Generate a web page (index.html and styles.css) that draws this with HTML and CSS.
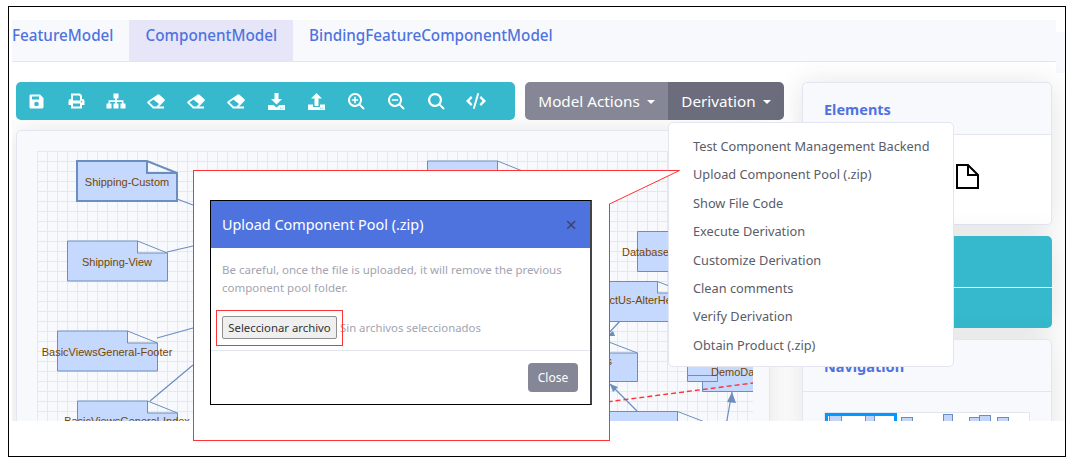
FILE: index.html
```html
<!DOCTYPE html>
<html lang="en">
<head>
    <meta charset="UTF-8">
    <title>Component Model</title>
    <link rel="stylesheet" href="styles.css">
</head>
<body>

<div class="frame">
    <div class="page">
        <div class="tabs-row">
            <nav class="tabs">
                <a class="tab">FeatureModel</a>
                <a class="tab active">ComponentModel</a>
                <a class="tab">BindingFeatureComponentModel</a>
            </nav>
            <div class="tabs-end"></div>
        </div>

        <div class="workspace">
            <div class="main">
                <div class="toolbar-row">
                    <div class="toolbar">
                        <!-- save -->
                        <span class="cell"><svg width="15" height="15" viewBox="0 0 15 15"><path fill-rule="evenodd" d="M1.500 0.500H11L14.500 4V13a1.500 1.500 0 0 1-1.500 1.500H2A1.500 1.500 0 0 1 .5 13V2A1.500 1.500 0 0 1 1.500 .5zM3 2.500V5.500H10V2.500zM7.500 7.700a2.300 2.300 0 1 0 0 4.600 2.300 2.300 0 0 0 0-4.600z"/></svg></span>
                        <!-- print -->
                        <span class="cell"><svg width="17" height="16" viewBox="0 0 17 16"><path fill-rule="evenodd" d="M3 .5H12L14 2.500V6h.5A2 2 0 0 1 16.500 8V12H14V15.500H3V12H.5V8A2 2 0 0 1 2.500 6H3zM5 2.500V7.500H12V3.500L11 2.500zM5 10.500V13.500H12V10.500zM13.500 8a.8.8 0 1 0 0 1.600.8.8 0 0 0 0-1.600z"/></svg></span>
                        <!-- sitemap -->
                        <span class="cell"><svg width="20" height="16" viewBox="0 0 20 16"><path d="M7.500 .5H12.500V5.500H10.800V7.300H17.500V10.500H19.500V15.500H14.500V10.500H16V9H10.800V10.500H12.500V15.500H7.500V10.500H9.200V9H4V10.500H5.500V15.500H.5V10.500H2.500V7.300H9.200V5.500H7.500z"/></svg></span>
                        <!-- clean -->
                        <span class="cell"><svg width="18" height="15" viewBox="0 0 18 15"><path fill-rule="evenodd" d="M10.500 .8a1.500 1.500 0 0 1 2 0l4.700 4.200a1.500 1.500 0 0 1 0 2.200L12 12.500H17V14.500H6L.8 9.500a1.500 1.500 0 0 1 0-2.200zM6.300 5.500 2.500 8.400 6.800 12.500H9.500L12 10z"/></svg></span>
                        <span class="cell"><svg width="18" height="15" viewBox="0 0 18 15"><path fill-rule="evenodd" d="M10.500 .8a1.500 1.500 0 0 1 2 0l4.700 4.200a1.500 1.500 0 0 1 0 2.200L12 12.500H17V14.500H6L.8 9.500a1.500 1.500 0 0 1 0-2.200zM6.300 5.500 2.500 8.400 6.800 12.500H9.500L12 10z"/></svg></span>
                        <span class="cell"><svg width="18" height="15" viewBox="0 0 18 15"><path fill-rule="evenodd" d="M10.500 .8a1.500 1.500 0 0 1 2 0l4.700 4.200a1.500 1.500 0 0 1 0 2.200L12 12.500H17V14.500H6L.8 9.500a1.500 1.500 0 0 1 0-2.200zM6.300 5.500 2.500 8.400 6.800 12.500H9.500L12 10z"/></svg></span>
                        <!-- download -->
                        <span class="cell"><svg width="17" height="17" viewBox="0 0 17 17"><path fill-rule="evenodd" d="M6.500 0H10.500V6H14L8.500 11.500 3 6H6.500zM0 12H5.500L8.500 14.500 11.500 12H17V17H0zM12 14.800v.8h1.200v-.8zM14.200 14.800v.8h1.200v-.8z"/></svg></span>
                        <!-- upload -->
                        <span class="cell"><svg width="17" height="17" viewBox="0 0 17 17"><path fill-rule="evenodd" d="M8.500 0 14 5.500H10.500V13H6.500V5.500H3zM0 11.500H5V14H12V11.500H17V17H0zM12 14.800v.8h1.200v-.8zM14.200 14.800v.8h1.200v-.8z"/></svg></span>
                        <!-- zoom in -->
                        <span class="cell"><svg width="17" height="17" viewBox="0 0 17 17"><path fill-rule="evenodd" d="M7 0A7 7 0 0 1 12.600 11.200L16.700 15.300 15.300 16.700 11.200 12.600A7 7 0 1 1 7 0zM7 2A5 5 0 1 0 7 12 5 5 0 0 0 7 2zM6.200 3.800H7.800V6.200H10.200V7.800H7.800V10.200H6.200V7.800H3.800V6.200H6.200z"/></svg></span>
                        <!-- zoom out -->
                        <span class="cell"><svg width="17" height="17" viewBox="0 0 17 17"><path fill-rule="evenodd" d="M7 0A7 7 0 0 1 12.600 11.200L16.700 15.300 15.300 16.700 11.200 12.600A7 7 0 1 1 7 0zM7 2A5 5 0 1 0 7 12 5 5 0 0 0 7 2zM3.800 6.200H10.200V7.800H3.800z"/></svg></span>
                        <!-- search -->
                        <span class="cell"><svg width="17" height="17" viewBox="0 0 17 17"><path fill-rule="evenodd" d="M7 0A7 7 0 0 1 12.600 11.200L16.700 15.300 15.300 16.700 11.200 12.600A7 7 0 1 1 7 0zM7 2.200A4.800 4.800 0 1 0 7 11.800 4.800 4.800 0 0 0 7 2.200z"/></svg></span>
                        <!-- code -->
                        <span class="cell"><svg width="20" height="16" viewBox="0 0 20 16"><path d="M11.300 0 13.200 .6 8.700 16 6.800 15.400zM5 3 6.500 4.700 3.400 8 6.500 11.300 5 13 0 8zM15 3 20 8 15 13 13.500 11.300 16.600 8 13.500 4.700z"/></svg></span>
                    </div>

                    <div class="btn-group">
                        <button class="btn caret">Model Actions</button>
                        <button class="btn caret dark">Derivation</button>
                    </div>
                </div>

                <div class="canvas-card">
                    <svg class="canvas" viewBox="37 151 716 280" width="716" height="280">
                        <defs>
                            <pattern id="grid" x="37" y="151" width="10" height="10" patternUnits="userSpaceOnUse">
                                <path d="M0 .5H10M.5 0V10" class="grid-line"/>
                            </pattern>
                        </defs>
                        <rect x="37" y="151" width="716" height="280" fill="url(#grid)"/>

                        <path class="edge" d="M177 199 193 205M167 252 193 246M157 338 193 328M150 401 193 365"/>
                        <path class="edge" d="M637 411 610 384M620 321 608 334M725 431 732 392"/>
                        <path class="edge-head" d="M610 384 618 387 613 392zM732 392 727 402 736 403zM607 336 613 331 615 336z"/>

                        <path class="note thick" d="M77 161H147L177 173V201H77zM147 161V173H177"/>
                        <path class="note" d="M67.500 241H137.500L167.500 253V281H67.500zM137.500 241V253H167.500"/>
                        <path class="note" d="M57.500 331H127.500L157.500 343V371H57.500zM127.500 331V343H157.500"/>
                        <path class="note" d="M77.500 401H147.500L177.500 413V441H77.500zM147.500 401V413H177.500"/>
                        <path class="note" d="M427.500 161H497.500L527.500 173V201H427.500zM497.500 161V173H527.500"/>
                        <path class="note" d="M637.500 231.500H707.500L737.500 243V271.500H637.500zM707.500 231.500V243H737.500"/>
                        <path class="note" d="M587.500 281.500H657.500L687.500 293V321.500H587.500zM657.500 281.500V293H687.500"/>
                        <path class="note" d="M537.500 341.500H607.500L637.500 353V381.500H537.500zM607.500 341.500V353H637.500"/>
                        <path class="note" d="M607.500 411.500H677.500L707.500 423V451.500H607.500zM677.500 411.500V423H707.500"/>

                        <path class="note" d="M702.500 351.500H770V391.500H702.500z"/>
                        <path class="note" d="M687.500 366.500H717.500V375.500H687.500zM687.500 375.500H717.500V381.500H687.500z"/>

                        <path class="dash" d="M560 408 753 383"/>

                        <text class="label" x="127" y="186">Shipping-Custom</text>
                        <text class="label" x="117" y="266">Shipping-View</text>
                        <text class="label" x="107" y="356">BasicViewsGeneral-Footer</text>
                        <text class="label" x="127" y="425">BasicViewsGeneral-Index</text>
                        <text class="label start" x="622" y="256">Database</text>
                        <text class="label" x="637" y="304">ContactUs-AlterHeader</text>
                        <text class="label end" x="612" y="365">Home-Views</text>
                        <text class="label start" x="711" y="376">DemoDataComponent</text>
                    </svg>
                </div>
            </div>

            <aside class="side">
                <div class="panel">
                    <div class="panel-head"><h6>Elements</h6></div>
                    <div class="panel-body elements">
                        <svg class="file-icon" width="24" height="26" viewBox="0 0 24 26"><path d="M2 2H13L23 12V25H2zM13 2V12H23"/></svg>
                    </div>
                </div>
                <div class="panel teal">
                    <div class="teal-top"></div>
                </div>
                <div class="panel">
                    <div class="panel-head"><h6>Navigation</h6></div>
                    <div class="panel-body nav-body">
                        <div class="minimap">
                            <i class="m0"></i><i class="m1"></i><i class="m2"></i>
                            <i class="m3"></i><i class="m4"></i><i class="m5"></i><i class="m6"></i>
                            <div class="view-box"></div>
                        </div>
                    </div>
                </div>
            </aside>
        </div>

        <ul class="dropdown">
            <li>Test Component Management Backend</li>
            <li>Upload Component Pool (.zip)</li>
            <li>Show File Code</li>
            <li>Execute Derivation</li>
            <li>Customize Derivation</li>
            <li>Clean comments</li>
            <li>Verify Derivation</li>
            <li>Obtain Product (.zip)</li>
        </ul>
    </div>

    <!-- callout: white zoom of the modal, tail points at the menu item -->
    <div class="callout">
        <div class="modal">
            <div class="modal-head">
                <span class="modal-title">Upload Component Pool (.zip)</span>
                <span class="modal-x">×</span>
            </div>
            <div class="modal-body">
                <p>Be careful, once the file is uploaded, it will remove the previous component pool folder.</p>
                <div class="file-row">
                    <button class="file-btn">Seleccionar archivo</button>
                    <span class="file-name">Sin archivos seleccionados</span>
                </div>
            </div>
            <div class="modal-foot">
                <button class="btn close">Close</button>
            </div>
        </div>
    </div>
    <svg class="tail" viewBox="0 0 72 35"><path class="tail-fill" d="M0 0H71L0 34z"/><path class="tail-line" d="M0 .5H70.500L.5 34"/></svg>
</div>

</body>
</html>
```

FILE: styles.css
```css
* {
    box-sizing: border-box;
}

body {
    margin: 0;
    background-color: #ffffff;
    font-family: "Noto Sans", Arial, sans-serif;
    color: #858796;
}

.frame {
    position: relative;
    width: 1058px;
    height: 451px;
    margin: 6px 0 0 8px;
    border: 1px solid #000000;
    background-color: #ffffff;
    overflow: hidden;
}

.page {
    position: relative;
    height: 401px;
    margin-top: 13px;
    margin-left: 3px;
    overflow: hidden;
}

/* tabs */
.tabs-row {
    display: flex;
    align-items: flex-start;
    height: 42px;
}

.tabs {
    display: flex;
    flex: none;
    width: 1044px;
    height: 42px;
    background-color: #f8f9fc;
    border-bottom: 1px solid #e3e6f0;
}

.tabs-end {
    flex: none;
    width: 9px;
    height: 41px;
    margin-top: 12px;
    background-color: #f8f9fc;
}

.tab {
    padding: 5px 16px 0;
    font-size: 15.250px;
    font-weight: 500;
    color: #4e73df;
}

.tab:first-child {
    padding-left: 0;
}

.tab.active {
    background-color: #e6e6f8;
}

/* main area */
.workspace {
    display: flex;
    padding: 20px 0 0 4px;
}

.main {
    flex: none;
    width: 754px;
}

.toolbar-row {
    display: flex;
    gap: 10px;
}

.toolbar {
    display: flex;
    align-items: center;
    flex: none;
    width: 499px;
    height: 38px;
    background-color: #36b9cc;
    border-radius: 5px;
}

.cell {
    display: flex;
    justify-content: center;
    width: 40px;
    fill: #ffffff;
}

.btn-group {
    display: flex;
    flex: none;
    height: 38px;
}

.btn {
    border: none;
    font-family: inherit;
    font-size: 15.250px;
    color: #ffffff;
    background-color: #858796;
    white-space: nowrap;
    padding: 0;
}

.btn-group .btn {
    width: 143px;
    border-radius: 5px 0 0 5px;
}

.btn-group .btn.dark {
    width: 116px;
    background-color: #6b6d7d;
    border-radius: 0 5px 5px 0;
}

.btn.caret::after {
    content: "";
    display: inline-block;
    margin-left: 7px;
    vertical-align: 3px;
    border-top: 4.500px solid #ffffff;
    border-left: 4.500px solid transparent;
    border-right: 4.500px solid transparent;
}

/* diagram */
.canvas-card {
    height: 320px;
    margin-top: 10px;
    padding: 20px 0 0 20px;
    background-color: #f8f9fc;
    border: 1px solid #e3e6f0;
    border-radius: 5px;
    box-shadow: 0 2px 28px rgba(58, 59, 69, 0.15);
}

.canvas {
    display: block;
}

.grid-line {
    fill: none;
    stroke: #e4ecdc;
    stroke-width: 1;
}

.edge {
    fill: none;
    stroke: #6c8ebf;
    stroke-width: 1.200;
}

.edge-head {
    fill: #6c8ebf;
}

.note {
    fill: #c4d9fd;
    stroke: #6c8ebf;
    stroke-width: 1;
}

.note.thick {
    stroke-width: 2;
}

.dash {
    fill: none;
    stroke: #ff3333;
    stroke-width: 1.400;
    stroke-dasharray: 5 3;
}

.label {
    font-family: "Liberation Sans", Arial, sans-serif;
    font-size: 11px;
    fill: #774400;
    text-anchor: middle;
}

.label.start {
    text-anchor: start;
}

.label.end {
    text-anchor: end;
}

/* right column */
.side {
    display: flex;
    flex: none;
    flex-direction: column;
    gap: 11px;
    width: 250px;
    margin-left: 32px;
}

.panel {
    background-color: #f8f9fc;
    border: 1px solid #e3e6f0;
    border-radius: 5px;
    overflow: hidden;
    box-shadow: 0 2px 28px rgba(58, 59, 69, 0.15);
}

.panel-head {
    height: 52px;
    padding: 16px 21px 0;
    border-bottom: 1px solid #e3e6f0;
}

.panel-head h6 {
    margin: 0;
    font-size: 14.500px;
    font-weight: 700;
    color: #4e73df;
}

.panel-body.elements {
    display: flex;
    justify-content: flex-end;
    height: 89px;
    padding: 28px 72px 0 0;
    background-color: #ffffff;
}

.file-icon {
    fill: #ffffff;
    stroke: #000000;
    stroke-width: 2;
}

.panel.teal {
    height: 92px;
    background-color: #36b9cc;
    border: none;
}

.teal-top {
    height: 52px;
    border-bottom: 1px solid #ffffff;
}

.nav-body {
    padding: 20px 21px;
}

.minimap {
    position: relative;
    height: 60px;
    background-color: #ffffff;
    border: 1px solid #e3e6f0;
}

.view-box {
    position: absolute;
    left: 0;
    top: 0;
    width: 72px;
    height: 40px;
    border: 3px solid #0099ff;
}

.minimap i {
    position: absolute;
    height: 9px;
    background-color: #c3d6fa;
    border: 1px solid #6c8ebf;
}

.m0 { left: 4px; top: 2px; width: 13px; }
.m1 { left: 40px; top: 2px; width: 10px; }
.m2 { left: 76px; top: 4px; width: 12px; }
.m3 { left: 118px; top: 1px; width: 10px; }
.m4 { left: 144px; top: 4px; width: 12px; }
.m5 { left: 154px; top: 2px; width: 12px; }
.m6 { left: 172px; top: 4px; width: 12px; }

/* dropdown of the Derivation button */
.dropdown {
    position: absolute;
    left: 656px;
    top: 102px;
    width: 286px;
    margin: 0;
    padding: 9px 0 7px;
    list-style: none;
    background-color: #ffffff;
    border: 1px solid #e3e6f0;
    border-radius: 5px;
}

.dropdown li {
    height: 28.400px;
    padding-left: 24px;
    font-size: 12.750px;
    line-height: 28px;
    color: #5a5c69;
}

/* callout with the modal */
.callout {
    position: absolute;
    left: 184px;
    top: 163px;
    width: 417px;
    height: 271px;
    padding: 29px 0 0 16px;
    background-color: #ffffff;
    border: 1px solid #ff3333;
}

.tail {
    position: absolute;
    left: 600px;
    top: 163px;
    width: 72px;
    height: 35px;
    overflow: visible;
}

.tail-fill {
    fill: #ffffff;
}

.tail-line {
    fill: none;
    stroke: #ff3333;
    stroke-width: 1;
}

.modal {
    width: 382px;
    height: 205px;
    background-color: #ffffff;
    border: 1px solid #000000;
    border-right: 2px solid #444444;
}

.modal-head {
    display: flex;
    justify-content: space-between;
    align-items: center;
    height: 47px;
    padding: 0 13px 0 11px;
    background-color: #4e73df;
}

.modal-title {
    font-size: 14.400px;
    color: #ffffff;
}

.modal-x {
    font-size: 20px;
    color: #3b4468;
}

.modal-body {
    height: 103px;
    padding: 13px 11px 0;
    border-bottom: 1px solid #e3e6f0;
}

.modal-body p {
    margin: 0 0 19px;
    font-size: 11.500px;
    line-height: 18px;
    color: #a3a4b0;
}

.file-row {
    position: relative;
    display: flex;
    align-items: center;
    gap: 3px;
}

/* red mark around the file button */
.file-row::before {
    content: "";
    position: absolute;
    left: -6px;
    top: -6px;
    width: 125px;
    height: 34px;
    border: 1px solid #ff3333;
}

.file-btn {
    width: 115px;
    height: 23px;
    padding: 0;
    font-family: inherit;
    font-size: 11.350px;
    color: #333333;
    background-color: #efefef;
    border: 1px solid #8f8f8f;
    border-radius: 2px;
}

.file-name {
    font-size: 11.350px;
    color: #a3a4b0;
}

.modal-foot {
    display: flex;
    justify-content: flex-end;
    padding: 12px 12px 0;
}

.btn.close {
    width: 50px;
    height: 29px;
    font-size: 12px;
    border-radius: 4px;
}
```
